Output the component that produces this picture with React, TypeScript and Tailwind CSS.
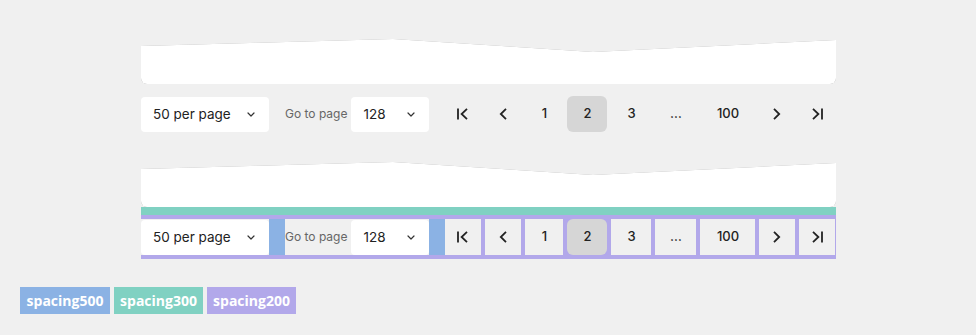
import React from "react";

const pages = [
  { label: "1", w: "w-[38px]" },
  { label: "2", w: "w-10", active: true },
  { label: "3", w: "w-10" },
  { label: "…", w: "w-[41px]" },
  { label: "100", w: "w-[55px]" },
];

function ChevronDown() {
  return (
    <svg width="8" height="5" viewBox="0 0 8 5" fill="none" className="text-[#333]">
      <path d="M1 1l3 3 3-3" stroke="currentColor" strokeWidth="1.2" strokeLinecap="round" strokeLinejoin="round" />
    </svg>
  );
}

function NavIcon({ kind }: { kind: "first" | "prev" | "next" | "last" }) {
  return (
    <svg width="14" height="14" viewBox="0 0 14 14" fill="none" className="text-[#222]">
      {kind === "first" && (
        <>
          <path d="M2 1.5v11" stroke="currentColor" strokeWidth="1.8" />
          <path d="M11 1.8L5.6 7l5.4 5.2" stroke="currentColor" strokeWidth="1.8" />
        </>
      )}
      {kind === "prev" && <path d="M10 1.8L4.8 7l5.2 5.2" stroke="currentColor" strokeWidth="1.8" />}
      {kind === "next" && <path d="M4 1.8L9.2 7 4 12.2" stroke="currentColor" strokeWidth="1.8" />}
      {kind === "last" && (
        <>
          <path d="M3 1.8L8.4 7 3 12.2" stroke="currentColor" strokeWidth="1.8" />
          <path d="M12 1.5v11" stroke="currentColor" strokeWidth="1.8" />
        </>
      )}
    </svg>
  );
}

function TornCard() {
  return (
    <div className="[filter:drop-shadow(0_0_0.6px_rgba(0,0,0,0.35))]">
      <div className="h-[45px] rounded-b-md bg-white [clip-path:polygon(0_7px,252px_0,452px_13px,100%_1px,100%_100%,0_100%)]" />
    </div>
  );
}

function Select({ value, w }: { value: string; w: string }) {
  return (
    <div className={`flex h-[35px] ${w} items-center justify-between rounded bg-white pl-3 pr-[14px] text-[13.5px] text-[#222]`}>
      <span>{value}</span>
      <ChevronDown />
    </div>
  );
}

function PageButton({ children, w, active }: { children: React.ReactNode; w: string; active?: boolean }) {
  return (
    <div
      className={`flex h-9 ${w} items-center justify-center text-[13px] font-medium text-[#222] ${
        active ? "rounded-md bg-[#d6d6d6]" : "bg-[#f0f0f0]"
      }`}
    >
      {children}
    </div>
  );
}

function Pagination({ overlay }: { overlay?: boolean }) {
  const gap = overlay ? "bg-[#8bb2e4]" : "";
  return (
    <>
      <div className={`h-2 ${overlay ? "bg-[#80d1c2]" : ""}`} />
      <div className={`flex items-center border-y-4 ${overlay ? "border-[#b2a8ea]" : "border-transparent"}`}>
        <Select value="50 per page" w="w-32" />
        <div className={`h-9 w-4 ${gap}`} />
        <span className="pr-1 text-[12px] text-[#666]">Go to page</span>
        <Select value="128" w="w-[78px]" />
        <div className={`h-9 w-4 ${gap}`} />
        <div className={`flex flex-1 gap-1 ${overlay ? "bg-[#b2a8ea]" : ""}`}>
          <PageButton w="w-9">
            <NavIcon kind="first" />
          </PageButton>
          <PageButton w="w-9">
            <NavIcon kind="prev" />
          </PageButton>
          {pages.map((p) => (
            <PageButton key={p.label} w={p.w} active={p.active}>
              {p.label}
            </PageButton>
          ))}
          <PageButton w="w-9">
            <NavIcon kind="next" />
          </PageButton>
          <PageButton w="w-9">
            <NavIcon kind="last" />
          </PageButton>
        </div>
      </div>
    </>
  );
}

export default function App() {
  return (
    <div className="h-[335px] w-[976px] overflow-hidden bg-[#f0f0f0] font-['Inter',sans-serif]">
      <div className="ml-[141px] w-[695px] pt-[39px]">
        <TornCard />
        <Pagination />
        <div className="mt-[26px]">
          <TornCard />
          <Pagination overlay />
        </div>
      </div>
      <div className="ml-5 mt-[28px] flex gap-1 font-['Open_Sans',sans-serif] text-[14px] font-bold text-white">
        <span className="flex h-[27px] w-[90px] items-center justify-center bg-[#8bb2e4]">spacing500</span>
        <span className="flex h-[27px] w-[89px] items-center justify-center bg-[#80d1c2]">spacing300</span>
        <span className="flex h-[27px] w-[89px] items-center justify-center bg-[#b2a8ea]">spacing200</span>
      </div>
    </div>
  );
}
